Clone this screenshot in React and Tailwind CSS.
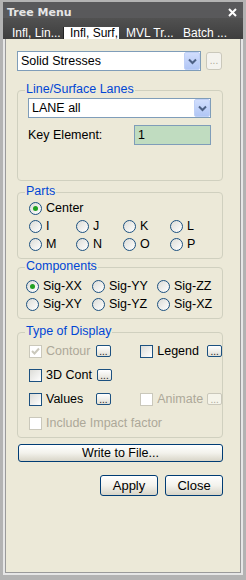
import { useState } from "react";

const SANS = "font-['Liberation_Sans',Arial,sans-serif]";

function Chevron() {
  return (
    <svg width="9" height="7" viewBox="0 0 9 7">
      <polyline points="1,1.5 4.5,5 8,1.5" fill="none" stroke="#4d6185" strokeWidth="2" />
    </svg>
  );
}

function Combo({ value, width }) {
  return (
    <div className={`${width} h-[20px] border border-[#7f9db9] bg-white flex items-center`}>
      <span className="flex-1 pl-[3px] whitespace-nowrap">{value}</span>
      <span className="w-[16px] h-[18px] mr-[0px] rounded-[2px] border border-[#bfd0f7] bg-linear-to-b from-[#d1defd] to-[#b1c6f5] flex items-center justify-center">
        <Chevron />
      </span>
    </div>
  );
}

function DotsButton({ disabled }) {
  return (
    <span
      className={`w-[15px] h-[12px] rounded-[2px] border flex items-end justify-center text-[10px] leading-[9px] ${
        disabled
          ? "border-[#cac8bb] text-[#aca899] bg-[#f5f4ea]"
          : "border-[#1c5180] text-[#222] bg-linear-to-b from-white to-[#e2e0d6]"
      }`}
    >
      ...
    </span>
  );
}

function Radio({ checked, label }) {
  return (
    <label className="flex items-center gap-[4px] h-[18px] whitespace-nowrap">
      <span className="w-[13px] h-[13px] rounded-full border border-[#1c5180] bg-linear-to-br from-[#dcdcd7] to-white flex items-center justify-center shrink-0">
        {checked && <span className="w-[5px] h-[5px] rounded-full bg-[#21a121]" />}
      </span>
      <span>{label}</span>
    </label>
  );
}

function Check({ checked, disabled, label }) {
  return (
    <label className={`flex items-center gap-[4px] whitespace-nowrap ${disabled ? "text-[#aca899]" : ""}`}>
      <span
        className={`w-[13px] h-[13px] border shrink-0 flex items-center justify-center ${
          disabled ? "border-[#cac8bb] bg-white" : "border-[#1c5180] bg-linear-to-br from-[#dcdcd7] to-white"
        }`}
      >
        {checked && (
          <svg width="9" height="9" viewBox="0 0 9 9">
            <polyline points="1,4 3.5,6.5 8,1.5" fill="none" stroke={disabled ? "#cac8bb" : "#21a121"} strokeWidth="2" />
          </svg>
        )}
      </span>
      <span>{label}</span>
    </label>
  );
}

function Group({ title, className, children }) {
  return (
    <div className={`relative w-[206px] border border-[#d0d0bf] rounded-[4px] ${className}`}>
      <span className="absolute left-[7px] -top-[9px] px-[1px] bg-[#ece9d8] text-[#0046d5] leading-[15px]">{title}</span>
      {children}
    </div>
  );
}

const tabs = [
  { label: "Infl, Lin...", cls: "w-[60px] pl-[9px]" },
  { label: "Infl, Surf,", cls: "w-[56px] pl-[6px]" },
  { label: "MVL Tr...", cls: "w-[61px] pl-[7px]" },
  { label: "Batch ...", cls: "flex-1 pl-[3px]" },
];

export default function App() {
  const [tab] = useState(1);

  return (
    <div className={`w-[246px] h-[580px] bg-[#b3b3b3] pt-[2px] px-[3px] pb-[5px] flex flex-col text-[12.5px] text-black ${SANS}`}>
      {/* title bar */}
      <div className="h-[16px] bg-[#59595b] flex justify-between shrink-0">
        <span className="pl-[4px] pt-[4px] leading-[13px] text-[11px] font-bold text-[#e6e6e6] font-['DejaVu_Sans',Verdana,sans-serif]">
          Tree Menu
        </span>
        <svg width="9" height="9" viewBox="0 0 9 9" className="mt-[6px] mr-[6px]">
          <path d="M1 1L8 8M8 1L1 8" stroke="#fff" strokeWidth="2" />
        </svg>
      </div>

      {/* tabs */}
      <div className="h-[21px] bg-linear-to-b from-[#515151] to-[#3e3e3e] flex pt-[9px] shrink-0 text-[12px]">
        {tabs.map((t, i) => (
          <div
            key={t.label}
            className={`${t.cls} h-[12px] leading-[12px] whitespace-nowrap overflow-hidden ${
              i === tab ? "bg-white text-black border-l border-[#222]" : "text-white"
            }`}
          >
            {t.label}
          </div>
        ))}
      </div>

      {/* body */}
      <div className="flex-1 border-2 border-t-0 border-[#e6e6e6]">
        <div className="h-full border border-t-0 border-[#9a9a9a] bg-[#ece9d8] pl-[11px] pt-[12px] flex flex-col">
          <div className="flex items-center">
            <Combo value="Solid Stresses" width="w-[184px]" />
            <span className="ml-[5px] w-[16px] h-[18px] rounded-[3px] border border-[#cac8bb] bg-[#f4f3ee] text-[#aca899] text-[10px] leading-[10px] flex items-end justify-center pb-[3px]">
              ...
            </span>
          </div>

          <Group title="Line/Surface Lanes" className="mt-[19px] h-[91px] pl-[10px] pt-[7px]">
            <Combo value="LANE all" width="w-[183px]" />
            <div className="mt-[7px] flex items-center w-[183px]">
              <span>Key Element:</span>
              <span className="ml-auto w-[77px] h-[20px] border border-[#7f9db9] bg-[#c0dcc0] pl-[3px] leading-[18px]">1</span>
            </div>
          </Group>

          <Group title="Parts" className="mt-[11px] h-[67px] pl-[11px] pt-[6px]">
            <Radio checked label="Center" />
            <div className="grid grid-cols-[47px_47px_47px_47px]">
              {["I", "J", "K", "L", "M", "N", "O", "P"].map((p) => (
                <Radio key={p} label={p} />
              ))}
            </div>
          </Group>

          <Group title="Components" className="mt-[8px] h-[52px] pl-[8px] pt-[9px]">
            <div className="grid grid-cols-[66px_65px_65px]">
              {["Sig-XX", "Sig-YY", "Sig-ZZ", "Sig-XY", "Sig-YZ", "Sig-XZ"].map((c, i) => (
                <Radio key={c} checked={i === 0} label={c} />
              ))}
            </div>
          </Group>

          <Group title="Type of Display" className="mt-[13px] h-[106px] pl-[11px] pt-[6px]">
            <div className="h-[24px] flex items-center">
              <div className="w-[68px]">
                <Check checked disabled label="Contour" />
              </div>
              <DotsButton />
              <div className="w-[30px]" />
              <div className="w-[68px]">
                <Check label="Legend" />
              </div>
              <DotsButton />
            </div>
            <div className="h-[24px] flex items-center">
              <div className="w-[68px]">
                <Check label="3D Cont" />
              </div>
              <DotsButton />
            </div>
            <div className="h-[24px] flex items-center">
              <div className="w-[68px]">
                <Check label="Values" />
              </div>
              <DotsButton />
              <div className="w-[30px]" />
              <div className="w-[68px]">
                <Check disabled label="Animate" />
              </div>
              <DotsButton disabled />
            </div>
            <div className="h-[24px] flex items-center">
              <Check disabled label="Include Impact factor" />
            </div>
          </Group>

          <button className="mt-[6px] ml-[1px] w-[205px] h-[18px] border border-[#003c74] rounded-[3px] bg-linear-to-b from-white via-[#f3f2ec] to-[#d8d5c8] leading-[16px]">
            Write to File...
          </button>

          <div className="mt-[13px] w-[206px] flex justify-end gap-[7px]">
            <button className="w-[58px] h-[21px] border border-[#003c74] rounded-[3px] bg-linear-to-b from-white via-[#f3f2ec] to-[#d8d5c8] text-[13px]">
              Apply
            </button>
            <button className="w-[58px] h-[21px] border border-[#003c74] rounded-[3px] bg-linear-to-b from-white via-[#f3f2ec] to-[#d8d5c8] text-[13px]">
              Close
            </button>
          </div>
        </div>
      </div>
    </div>
  );
}
